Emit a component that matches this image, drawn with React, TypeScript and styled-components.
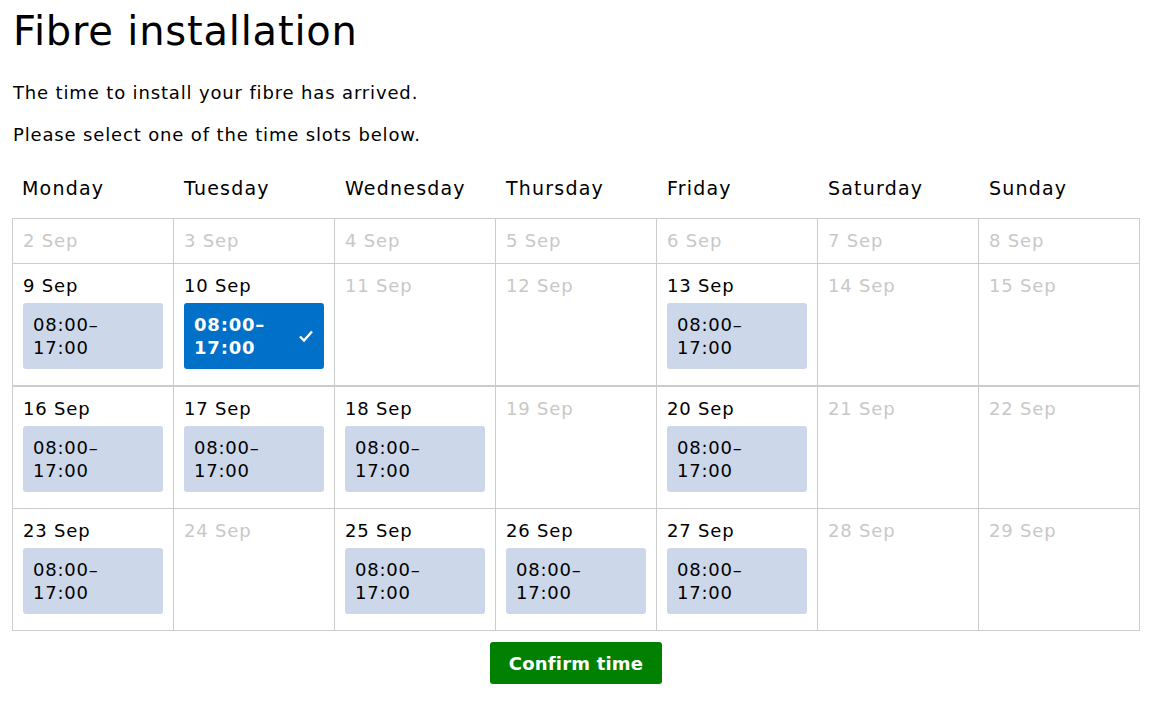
import React, { useState } from "react";
import styled, { createGlobalStyle } from "styled-components";

const GlobalStyle = createGlobalStyle`
  html, body { margin: 0; padding: 0; background: #ffffff; }
  body {
    font-family: "DejaVu Sans", "Noto Sans", sans-serif;
    color: #000000;
  }
`;

const Page = styled.div`
  width: 1128px;
  padding: 0 12px;
`;

const Title = styled.h1`
  margin: 8px 0 0 1px;
  font-size: 40px;
  line-height: 46px;
  font-weight: 500;
  letter-spacing: 0.8px;
`;

const Lead = styled.p<{ $top: number }>`
  margin: ${(p) => p.$top}px 0 0 1px;
  font-size: 18px;
  line-height: 24px;
  letter-spacing: 0.85px;
`;

const Calendar = styled.div`
  display: grid;
  grid-template-columns: 162px repeat(6, 161px);
  margin-top: 23px;
`;

const DayName = styled.div`
  padding: 0 10px 13px;
  height: 48px;
  box-sizing: border-box;
  display: flex;
  align-items: center;
  font-size: 19px;
  line-height: 24px;
  letter-spacing: 1.2px;
`;

const Cell = styled.div<{ $first: boolean; $top: boolean; $thickBottom: boolean }>`
  border-right: 1px solid #cccccc;
  border-bottom: ${(p) => (p.$thickBottom ? 2 : 1)}px solid #cccccc;
  border-left: ${(p) => (p.$first ? "1px solid #cccccc" : "none")};
  border-top: ${(p) => (p.$top ? "1px solid #cccccc" : "none")};
  padding: 10px;
  min-height: ${(p) => (p.$top ? 24 : 101)}px;
`;

const DateLabel = styled.div<{ $muted: boolean }>`
  font-size: 18px;
  line-height: 24px;
  letter-spacing: 0.8px;
  color: ${(p) => (p.$muted ? "#c8c8c8" : "#000000")};
`;

const Slot = styled.button<{ $selected: boolean }>`
  position: relative;
  display: block;
  width: 140px;
  height: 66px;
  margin-top: 5px;
  padding: 10px;
  border: none;
  border-radius: 3px;
  background: ${(p) => (p.$selected ? "#0070c9" : "#cdd7ea")};
  color: ${(p) => (p.$selected ? "#ffffff" : "#000000")};
  font-family: inherit;
  font-size: 18px;
  line-height: 23px;
  letter-spacing: 0.8px;
  font-weight: ${(p) => (p.$selected ? 600 : 400)};
  text-align: left;
  cursor: pointer;
`;

const Check = styled.svg`
  position: absolute;
  right: 10px;
  top: 26px;
`;

const Footer = styled.div`
  display: flex;
  justify-content: center;
  margin-top: 11px;
`;

const ConfirmButton = styled.button`
  width: 172px;
  height: 42px;
  border: none;
  border-radius: 3px;
  background: #008000;
  color: #ffffff;
  font-family: inherit;
  font-size: 18px;
  font-weight: 600;
  letter-spacing: 0.2px;
  cursor: pointer;
`;

const days = ["Monday", "Tuesday", "Wednesday", "Thursday", "Friday", "Saturday", "Sunday"];
const available = new Set([9, 10, 13, 16, 17, 18, 20, 23, 25, 26, 27]);

export default function App() {
  const [selected, setSelected] = useState(10);
  const weeks = [2, 9, 16, 23].map((start) => Array.from({ length: 7 }, (_, i) => start + i));
  return (
    <Page>
      <GlobalStyle />
      <Title>Fibre installation</Title>
      <Lead $top={27}>The time to install your fibre has arrived.</Lead>
      <Lead $top={18}>Please select one of the time slots below.</Lead>
      <Calendar>
        {days.map((d) => (
          <DayName key={d}>{d}</DayName>
        ))}
        {weeks.map((week, wi) =>
          week.map((day, di) => (
            <Cell key={day} $first={di === 0} $top={wi === 0} $thickBottom={wi === 1}>
              <DateLabel $muted={!available.has(day)}>{day} Sep</DateLabel>
              {available.has(day) && (
                <Slot $selected={selected === day} onClick={() => setSelected(day)}>
                  08:00–
                  <br />
                  17:00
                  {selected === day && (
                    <Check width="16" height="14" viewBox="0 0 16 14">
                      <path d="M2 7.5 L6 11.5 L14 2.5" fill="none" stroke="#ffffff" strokeWidth="2.4" />
                    </Check>
                  )}
                </Slot>
              )}
            </Cell>
          ))
        )}
      </Calendar>
      <Footer>
        <ConfirmButton>Confirm time</ConfirmButton>
      </Footer>
    </Page>
  );
}
